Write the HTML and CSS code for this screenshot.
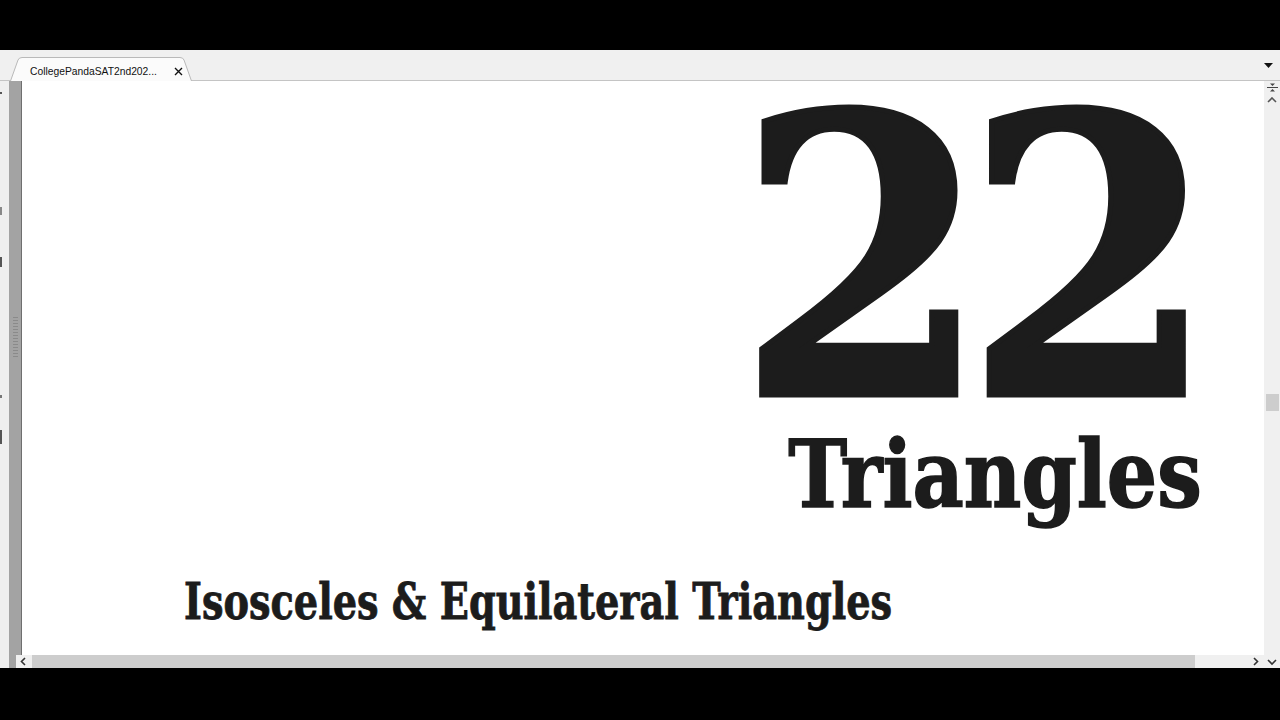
FILE: index.html
```html
<!DOCTYPE html>
<html>
<head>
<meta charset="utf-8">
<link rel="stylesheet" href="styles.css">
</head>
<body>
<div class="black-top"></div>
<div class="window">
  <div class="tabbar">
    <div class="tab">
      <svg class="tab-shape" width="184" height="24" viewBox="0 0 184 24"><path d="M0.5 24 L8 3 Q9 0.5 12 0.5 L170 0.5 Q173 0.5 174 3 L181.5 24" fill="#fbfbfb" stroke="#b9b9b9" stroke-width="1"/></svg>
      <span class="tab-title">CollegePandaSAT2nd202...</span>
      <svg class="tab-close" width="9" height="9" viewBox="0 0 9 9"><path d="M1 1 L8 8 M8 1 L1 8" stroke="#111" stroke-width="1.4"/></svg>
    </div>
    <div class="tab-spacer"></div>
    <svg class="dropdown" width="10" height="6" viewBox="0 0 10 6"><path d="M0 0 H9 L4.5 5 Z" fill="#111"/></svg>
  </div>
  <div class="main">
    <div class="leftstrip">
      <div class="strip-light">
        <div class="mark m1"></div>
        <div class="mark m2"></div>
        <div class="mark m3"></div>
        <div class="mark m4"></div>
        <div class="mark m5"></div>
      </div>
      <div class="strip-gray"><div class="grip"></div></div>
    </div>
    <div class="content">
      <div class="chapter-num">22</div>
      <div class="chapter-title">Triangles</div>
      <div class="section-title">Isosceles &amp; Equilateral Triangles</div>
    </div>
    <div class="vscroll">
      <svg class="vs-split" width="12" height="9" viewBox="0 0 12 9"><path d="M4 0.5 H9 L6.5 3 Z M4 8.5 H9 L6.5 6 Z" fill="#444"/><path d="M1 4.5 H12" stroke="#444" stroke-width="1"/></svg>
      <svg class="vs-up" width="10" height="6" viewBox="0 0 10 6"><path d="M1 5 L5 1 L9 5" fill="none" stroke="#555" stroke-width="1.6"/></svg>
      <div class="vs-thumb"></div>
    </div>
  </div>
  <div class="hscroll">
    <div class="hs-lead"></div>
    <svg class="hs-arrow" width="16" height="13" viewBox="0 0 16 13"><path d="M9 3 L5.5 6.5 L9 10" fill="none" stroke="#333" stroke-width="1.6"/></svg>
    <div class="hs-track"><div class="hs-thumb"></div></div>
    <svg class="hs-arrow" width="16" height="13" viewBox="0 0 16 13"><path d="M6 3 L9.5 6.5 L6 10" fill="none" stroke="#333" stroke-width="1.6"/></svg>
    <svg class="hs-down" width="16" height="13" viewBox="0 0 16 13"><path d="M4 5 L8 9 L12 5" fill="none" stroke="#333" stroke-width="1.6"/></svg>
  </div>
</div>
<div class="black-bottom"></div>
</body>
</html>
```
FILE: styles.css
```css
html, body {
  margin: 0;
  padding: 0;
  background: #000;
  width: 1280px;
  height: 720px;
  overflow: hidden;
}
.black-top { height: 50px; background: #000; }
.black-bottom { height: 52px; background: #000; }
.window {
  height: 618px;
  display: flex;
  flex-direction: column;
  background: #f0f0f0;
}
.tabbar {
  height: 31px;
  display: flex;
  align-items: flex-end;
  border-bottom: 1px solid #c4c4c4;
  box-sizing: border-box;
  background: #f0f0f0;
}
.tab {
  position: relative;
  width: 184px;
  height: 23px;
  margin-left: 10px;
  display: flex;
  align-items: center;
  font-family: "Liberation Sans", Arial, sans-serif;
  font-size: 10.3px;
  color: #111;
}
.tab-shape { position: absolute; left: 0; top: 0; }
.tab-title { position: relative; margin-left: 20px; margin-top: 5px; }
.tab-close { position: relative; margin-left: 17px; margin-top: 6px; }
.tab-spacer { flex: 1; }
.dropdown { margin: 0 6px 11px 0; }
.main {
  flex: 1;
  display: flex;
  min-height: 0;
}
.leftstrip { width: 22px; display: flex; }
.strip-light {
  width: 9px;
  background: #efefef;
  display: flex;
  flex-direction: column;
}
.mark { width: 2px; background: #555; }
.m1 { height: 2px; margin-top: 11px; }
.m2 { height: 8px; margin-top: 113px; background: #888; }
.m3 { height: 10px; margin-top: 42px; }
.m4 { height: 3px; margin-top: 128px; background: #777; }
.m5 { height: 14px; margin-top: 32px; }
.strip-gray {
  width: 12px;
  background: #a3a3a3;
  border-right: 1px solid #6f6f6f;
  display: flex;
  justify-content: center;
  padding-top: 236px;
  box-sizing: content-box;
}
.grip {
  width: 5px;
  height: 42px;
  background: repeating-linear-gradient(to bottom, #8a8a8a 0 1px, transparent 1px 3px);
}
.content {
  flex: 1;
  background: #fff;
  display: flex;
  flex-direction: column;
  font-family: "DejaVu Serif Condensed", "DejaVu Serif", serif;
  font-weight: bold;
  color: #1c1c1c;
  overflow: hidden;
}
.chapter-num {
  align-self: flex-end;
  margin-right: 71px;
  font-size: 388px;
  line-height: 357px;
  height: 338px;
  letter-spacing: -22px;
  -webkit-text-stroke: 5px #1c1c1c;
  transform-origin: right top;
  transform: scaleX(1.03);
}
.chapter-title {
  align-self: flex-end;
  margin-right: 62px;
  font-size: 94px;
  line-height: 110px;
  height: 110px;
  -webkit-text-stroke: 1.5px #1c1c1c;
  transform-origin: right top;
  transform: scaleX(0.936);
}
.section-title {
  margin-left: 162px;
  margin-top: 42px;
  font-size: 51px;
  line-height: 60px;
  white-space: nowrap;
  -webkit-text-stroke: 0.8px #1c1c1c;
  transform-origin: left top;
  transform: scaleX(0.834);
}
.vscroll {
  width: 16px;
  background: #f0f0f0;
  display: flex;
  flex-direction: column;
  align-items: center;
}
.vs-split { margin-top: 2px; }
.vs-up { margin-top: 5px; }
.vs-thumb {
  width: 13px;
  height: 17px;
  margin-top: 291px;
  background: #cdcdcd;
}
.hscroll {
  height: 13px;
  display: flex;
  align-items: stretch;
  background: #f0f0f0;
}
.hs-lead { width: 16px; background: linear-gradient(to right, #efefef 0 9px, #a3a3a3 9px 16px); }
.hs-track { flex: 1; display: flex; padding-right: 44px; }
.hs-thumb { width: 1163px; background: #cdcdcd; }
.hs-down { flex: none; }
```
